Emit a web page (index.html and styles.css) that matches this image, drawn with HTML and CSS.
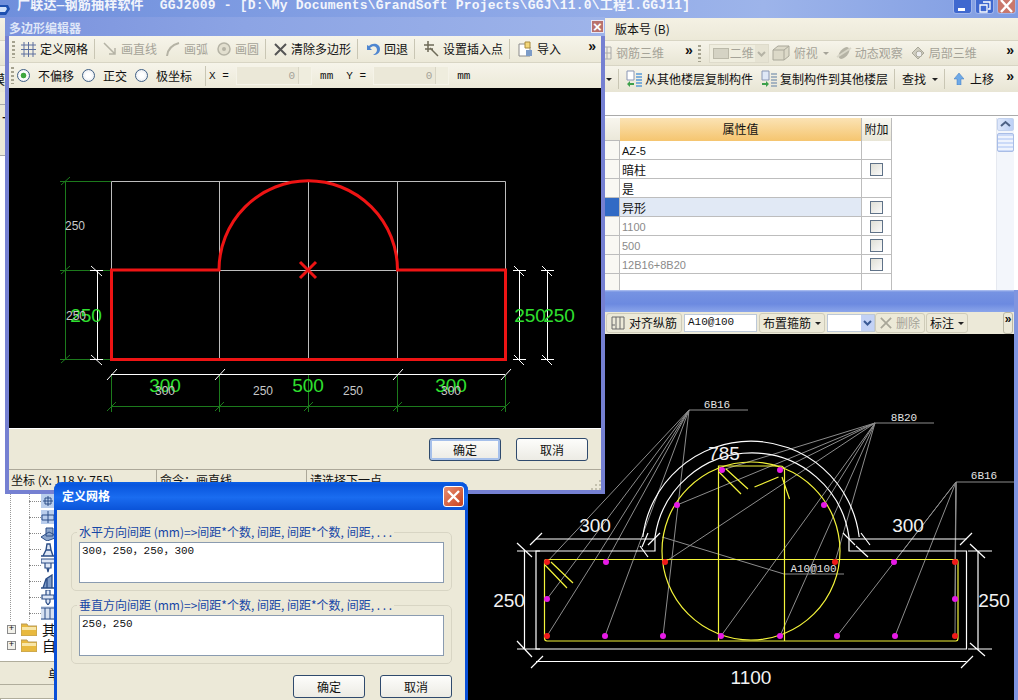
FILE: index.html
```html
<!DOCTYPE html>
<html lang="zh-CN">
<head>
    <meta charset="UTF-8">
    <title>广联达钢筋抽样软件 GGJ2009</title>
    <link rel="stylesheet" href="styles.css">
</head>
<body>
<div class="desktop">

    <!-- main window -->
    <div class="main-win">
        <div class="main-title">
            <svg class="app-icon" width="10" height="14" viewBox="0 0 10 14"><path d="M0 3h8l2 4-4 6H0z" fill="#1c4fb0"/><path d="M0 5h6l1 2-2 3H0z" fill="#cfe0fa"/></svg>
            <span class="main-title-text">广联达—钢筋抽样软件  GGJ2009 - [D:\My Documents\GrandSoft Projects\GGJ\11.0\工程1.GGJ11]</span>
            <div class="win-btns">
                <span class="win-btn"><svg width="19" height="14" viewBox="0 0 19 14"><rect x="5" y="8" width="7" height="3" fill="#fff"/></svg></span>
                <span class="win-btn"><svg width="19" height="14" viewBox="0 0 19 14"><path d="M8 2h7v7h-2M5 5h7v7H5z" fill="none" stroke="#fff" stroke-width="1.3"/></svg></span>
                <span class="win-btn close"><svg width="19" height="14" viewBox="0 0 19 14"><path d="M4 0l11 12M15 0L4 12" stroke="#fff" stroke-width="2.4"/></svg></span>
            </div>
        </div>
        <div class="bar menubar">
            <div class="tb-right"><span class="menu-item">版本号 (B)</span></div>
        </div>
        <div class="bar toolbar">
            <div class="tb-right">
                <svg class="ic ic-cut" width="8" height="16" viewBox="0 0 8 16"><path d="M0 2h7v12H0M3 2v12M0 8h7" fill="none" stroke="#aaa"/></svg>
                <span class="off w-steel">钢筋三维</span>
                <span class="more">»</span>
                <i class="grip"></i>
                <span class="combo off"><i class="combo-sw"></i>二维<b class="combo-arrow off-arrow"><svg width="13" height="17" viewBox="0 0 13 17"><path d="M3 7l3.500 3.500L10 7" fill="none" stroke="#b5b3a5" stroke-width="2"/></svg></b></span>
                <svg class="ic" width="20" height="18" viewBox="0 0 20 18"><path d="M2 6l5-4h11v10l-5 4H2zM2 6h11v10M13 6l5-4" fill="#dcd9c8" stroke="#aaa89a"/></svg>
                <span class="off">俯视</span>
                <span class="caret off-caret"></span>
                <svg class="ic gap-l" width="16" height="16" viewBox="0 0 16 16"><ellipse cx="8" cy="8" rx="4" ry="7" transform="rotate(40 8 8)" fill="#b5b3a5"/><path d="M1 12L15 3" stroke="#d8d6c8" stroke-width="2"/></svg>
                <span class="off">动态观察</span>
                <svg class="ic gap-l" width="16" height="16" viewBox="0 0 16 16"><path d="M2 8l6-6 6 6-6 6z" fill="#cfcdbf" stroke="#aaa89a"/><circle cx="9" cy="9" r="3" fill="#eee" stroke="#aaa89a"/></svg>
                <span class="off">局部三维</span>
                <span class="more push">»</span>
            </div>
        </div>
        <div class="bar toolbar tb-tall">
            <span class="cut-char">模</span>
            <div class="tb-right">
                <span class="caret"></span>
                <i class="sep"></i>
                <svg class="ic" width="17" height="18" viewBox="0 0 17 18"><path d="M1 1h7v9H1z" fill="#fff" stroke="#8a97b5"/><path d="M10 4h6M10 7h6M10 10h6M10 13h6M10 16h6" stroke="#5a9ad8" stroke-width="1.6"/><path d="M1 14l3-3v2h4v2H4v2z" fill="#3da04a"/></svg>
                <span>从其他楼层复制构件</span>
                <svg class="ic gap-m" width="17" height="18" viewBox="0 0 17 18"><path d="M1 1h7v9H1z" fill="#dfe8f7" stroke="#8a97b5"/><path d="M10 4h6M10 7h6M10 10h6M10 13h6M10 16h6" stroke="#8fa3b8" stroke-width="1.6"/><path d="M8 14l-3-3v2H1v2h4v2z" fill="#3da04a"/></svg>
                <span>复制构件到其他楼层</span>
                <i class="sep"></i>
                <span>查找</span>
                <span class="caret"></span>
                <i class="sep"></i>
                <svg class="ic gap-s" width="10" height="12" viewBox="0 0 10 12"><path d="M5 0l5 6H7v6H3V6H0z" fill="#6fa9e6" stroke="#3f78c0" stroke-width=".5"/></svg>
                <span class="up-label">上移</span>
                <span class="more push">»</span>
            </div>
        </div>

        <div class="workspace">
            <div class="side">
                <div class="side-head"><div class="side-tab"></div><div class="side-tick">-</div></div>
                <div class="tree">
                    <div class="tree-row leaf"><svg width="14" height="14" viewBox="0 0 14 14"><rect x="0" width="14" height="14" fill="#b9cdec"/><path d="M7 2v10M2 7h10M4 4h6v6H4z" fill="none" stroke="#2b4d86"/></svg></div>
                    <div class="tree-row leaf"><svg width="14" height="14" viewBox="0 0 14 14"><rect x="0" width="14" height="14" fill="#b9cdec"/><path d="M1 5h12v5H1zM7 1v12" fill="none" stroke="#2b4d86"/></svg></div>
                    <div class="tree-row leaf"><svg width="14" height="15" viewBox="0 0 14 15"><path d="M0 11l8-5 6 3v3l-8 3zM5 2h7v8H5z" fill="#8ea7cc" stroke="#2b4d86"/></svg></div>
                    <div class="tree-row leaf"><svg width="14" height="15" viewBox="0 0 14 15"><path d="M0 14h14M2 14l3-6h5l2 6M5 8l1-6h3l1 6" fill="#dfe7f5" stroke="#2b4d86" stroke-width="1.4"/></svg></div>
                    <div class="tree-row leaf"><svg width="14" height="15" viewBox="0 0 14 15"><path d="M0 1h14v4H0zM4 5h6v5H4zM6 10h2l-1 4z" fill="#dfe7f5" stroke="#2b4d86" stroke-width="1.2"/></svg></div>
                    <div class="tree-row leaf"><svg width="14" height="15" viewBox="0 0 14 15"><path d="M0 14h14M2 14l3-9 6-4v13M6 5v9" fill="#7f9cc8" stroke="#2b4d86" stroke-width="1.3"/></svg></div>
                    <div class="tree-row leaf"><svg width="14" height="15" viewBox="0 0 14 15"><path d="M5 0h4v5H5zM1 5h12v4H1zM5 9h4v3l-2 3-2-3z" fill="#dfe7f5" stroke="#2b4d86" stroke-width="1.2"/></svg></div>
                    <div class="tree-row leaf"><svg width="14" height="14" viewBox="0 0 14 14"><rect width="14" height="14" fill="#d6e0f0"/><path d="M0 2h14M4 2v11M9 2v11M0 13h14" stroke="#2b4d86"/></svg></div>
                    <div class="tree-row folder">
                        <span class="plus">+</span>
                        <svg width="16" height="14" viewBox="0 0 16 14"><path d="M0 2h6l1 2h9v10H0z" fill="#e8b93e" stroke="#b89a58"/><path d="M1 5h14v3H1z" fill="#f8e6a8"/></svg>
                        <span class="tree-label">其他</span>
                    </div>
                    <div class="tree-row folder">
                        <span class="plus">+</span>
                        <svg width="16" height="14" viewBox="0 0 16 14"><path d="M0 2h6l1 2h9v10H0z" fill="#e8b93e" stroke="#b89a58"/><path d="M1 5h14v3H1z" fill="#f8e6a8"/></svg>
                        <span class="tree-label">自定义</span>
                    </div>
                </div>
                <div class="side-foot">单构件输入</div>
                <div class="side-tabs"><div class="side-tab-white"></div></div>
            </div>

            <div class="content">
                <div class="grid-top"></div>
                <div class="grid-pane">
                    <div class="prop-grid">
                        <div class="hd-corner"></div><div class="hd-value">属性值</div><div class="hd-extra">附加</div>
                        <div class="rh"></div><div class="val latin">AZ-5</div><div class="chk"></div>
                        <div class="rh"></div><div class="val">暗柱</div><div class="chk"><i class="box"></i></div>
                        <div class="rh"></div><div class="val">是</div><div class="chk"></div>
                        <div class="rh sel"></div><div class="val sel">异形</div><div class="chk"><i class="box"></i></div>
                        <div class="rh"></div><div class="val latin dim">1100</div><div class="chk"><i class="box"></i></div>
                        <div class="rh"></div><div class="val latin dim">500</div><div class="chk"><i class="box"></i></div>
                        <div class="rh"></div><div class="val latin dim">12B16+8B20</div><div class="chk"><i class="box"></i></div>
                        <div class="rh last"></div><div class="val last"></div><div class="chk last"></div>
                    </div>
                    <div class="scroll">
                        <div class="scroll-btn"><svg width="17" height="13" viewBox="0 0 17 13"><path d="M4 8l4.500-4 4.500 4" fill="none" stroke="#4d6185" stroke-width="2"/></svg></div>
                        <div class="scroll-thumb"></div>
                    </div>
                </div>

                <div class="sub-panel">
                    <div class="sub-caption"></div>
                    <div class="bar sub-toolbar">
                        <div class="sub-tools">
                            <span class="flat-btn"><svg width="14" height="14" viewBox="0 0 14 14"><path d="M1 1h12v12H1zM5 1v12M9 1v12M1 9h3" fill="none" stroke="#6a6a6a"/></svg>对齐纵筋</span>
                            <span class="text-in">A10@100</span>
                            <span class="flat-btn tight">布置箍筋<span class="caret"></span></span>
                            <span class="select-in"><b class="combo-arrow"><svg width="13" height="16" viewBox="0 0 13 16"><path d="M3 6l3.500 3.500L10 6" fill="none" stroke="#3a5a95" stroke-width="2"/></svg></b></span>
                            <span class="flat-btn disabled"><svg width="14" height="14" viewBox="0 0 14 14"><path d="M1 1l12 12M13 1L1 13" stroke="#a8a698" stroke-width="2"/></svg>删除</span>
                            <span class="flat-btn tight">标注<span class="caret"></span></span>
                            <span class="more-box">»</span>
                        </div>
                    </div>
                    <svg class="rebar-canvas" viewBox="200 334 814 366" preserveAspectRatio="xMinYMin">
                        <!-- leader lines -->
                        <g stroke="#8c8c8c" stroke-width="1" fill="none">
                            <path d="M689 410H748M689 410L547 562M689 410L606 562M689 410L547 599M689 410L547 636M689 410L605 636M689 410L663 636"/>
                            <path d="M875 423H934M875 423L722 470M875 423L780 470M875 423L677 505M875 423L824 505M875 423L665 562M875 423L835 562M875 423L721 636M875 423L780 636"/>
                            <path d="M956 482H1014M956 482L894 562M956 482L955 562M956 482L955 599M956 482L955 636M956 482L837 636M956 482L895 636"/>
                            <path d="M662 537L784 574H844"/>
                        </g>
                        <!-- outline and dimensions -->
                        <g stroke="#fff" stroke-width="1.2" fill="none">
                            <path d="M536 551H655V537A98 98 0 0 1 849 537V551H966.500V649H536Z"/>
                            <path d="M642.800 537A109 109 0 0 1 859.200 537"/>
                            <path d="M536 539H654M849 539H966.500M524.500 551V649M978 551V649M536 661.500H966.500"/>
                            <path d="M530 545L542 533M648 545L660 533M642 547L648 533M861 533L870 545M843 533L855 545M960 545L972 533M517 551H540M517 543L532 557M517 649H540M517 641L532 657M968 551H992M970 544L985 558M968 649H992M970 643L985 656M531 668L543 656M961 668L973 656M640 546L648 557M856 546L868 557"/>
                        </g>
                        <!-- stirrups -->
                        <g stroke="#f4f43a" fill="none" stroke-width="1.2">
                            <circle cx="751" cy="551" r="89"/>
                            <path d="M546 559.500H956Q958 559.500 958 562V638Q958 641 956 641H547Q544.500 641 544.500 638V562Q544.500 559.500 546 559.500Z"/>
                            <path d="M718.500 641V466H780Q784.500 466 784.500 471V641"/>
                            <path d="M545 565L567 588M551 562L573 583M719 472L741 494M726 469L748 489M754.500 487L778.500 477M782 477L789.500 499"/>
                        </g>
                        <!-- bars -->
                        <g fill="#f01a1a">
                            <circle cx="547" cy="562" r="3"/><circle cx="665" cy="562" r="3"/><circle cx="835" cy="562" r="3"/><circle cx="955" cy="562" r="3"/><circle cx="547" cy="636" r="3"/><circle cx="955" cy="636" r="3"/>
                        </g>
                        <g fill="#e61ae6">
                            <circle cx="606" cy="562" r="3"/><circle cx="894" cy="562" r="3"/><circle cx="547" cy="599" r="3"/><circle cx="955" cy="599" r="3"/><circle cx="605" cy="636" r="3"/><circle cx="663" cy="636" r="3"/><circle cx="721" cy="636" r="3"/><circle cx="780" cy="636" r="3"/><circle cx="837" cy="636" r="3"/><circle cx="895" cy="636" r="3"/><circle cx="722" cy="470" r="3"/><circle cx="780" cy="470" r="3"/><circle cx="677" cy="505" r="3"/><circle cx="824" cy="505" r="3"/>
                        </g>
                        <g class="cad-big">
                            <text x="595" y="532">300</text><text x="908" y="532">300</text><text x="724" y="460">785</text><text x="509" y="607">250</text><text x="994" y="607">250</text><text x="751" y="684">1100</text>
                        </g>
                        <g class="cad-small">
                            <text x="717" y="408">6B16</text><text x="904" y="421">8B20</text><text x="984" y="479">6B16</text><text x="813.500" y="572">A10@100</text>
                        </g>
                    </svg>
                </div>
            </div>
        </div>
    </div>

    <!-- polygon editor -->
    <div class="editor-win">
        <div class="editor-title">多边形编辑器<span class="editor-close">×</span></div>
        <div class="bar ed-bar ed-bar1">
            <i class="grip"></i>
            <svg class="ic" width="15" height="15" viewBox="0 0 15 15"><path d="M3 0v15M7.500 0v15M12 0v15M0 3h15M0 7.500h15M0 12h15" stroke="#5c6f9e"/></svg>
            <span class="lbl">定义网格</span>
            <i class="sep"></i>
            <svg class="ic" width="14" height="14" viewBox="0 0 14 14"><path d="M1 1l11 11M12 6v6H6" fill="none" stroke="#b5b3a5" stroke-width="1.5"/></svg>
            <span class="lbl off">画直线</span>
            <svg class="ic gap-m" width="14" height="14" viewBox="0 0 14 14"><path d="M1 14Q2 4 13 1" fill="none" stroke="#b5b3a5" stroke-width="2"/></svg>
            <span class="lbl off">画弧</span>
            <svg class="ic gap-m" width="14" height="14" viewBox="0 0 14 14"><circle cx="7" cy="7" r="6" fill="#e2dfcf" stroke="#b5b3a5" stroke-width="1.500"/><circle cx="7" cy="7" r="2" fill="#b5b3a5"/></svg>
            <span class="lbl off">画圆</span>
            <i class="sep"></i>
            <svg class="ic" width="13" height="13" viewBox="0 0 13 13"><path d="M1 1l11 11M12 1L1 12" stroke="#555" stroke-width="2"/></svg>
            <span class="lbl">清除多边形</span>
            <i class="sep"></i>
            <svg class="ic" width="14" height="13" viewBox="0 0 14 13"><path d="M1 2v5h5L4 5c3-3 7-2 7 2 0 2-2 4-4 5 4 0 7-2 7-6C14 1 7-1 3 3z" fill="#4f86d0"/></svg>
            <span class="lbl">回退</span>
            <i class="sep"></i>
            <svg class="ic" width="16" height="16" viewBox="0 0 16 16"><path d="M5 0v11M1 4h10M2 8h8M7 7l8 8" stroke="#6e6a58" stroke-width="1.500"/></svg>
            <span class="lbl">设置插入点</span>
            <i class="sep"></i>
            <svg class="ic" width="15" height="16" viewBox="0 0 15 16"><path d="M1 3h8l3 3v9H1z" fill="#fff" stroke="#8a8a8a"/><path d="M7 1h5v6H7z" fill="#f3d77a" stroke="#a88a3c"/><path d="M8 9h6v6H8z" fill="#7d9cc8"/></svg>
            <span class="lbl">导入</span>
            <span class="more push">»</span>
        </div>
        <div class="bar ed-bar ed-bar2">
            <i class="grip"></i>
            <i class="radio on"></i><span class="lbl r1">不偏移</span>
            <i class="radio"></i><span class="lbl r2">正交</span>
            <i class="radio"></i><span class="lbl r3">极坐标</span>
            <i class="sep"></i>
            <span class="mono x-label">X =</span>
            <span class="num-in">0<b class="spin"></b></span>
            <span class="mono mm">mm</span>
            <span class="mono y-label">Y =</span>
            <span class="num-in">0<b class="spin"></b></span>
            <span class="mono mm">mm</span>
        </div>
        <svg class="editor-canvas" viewBox="9 88 592 340">
            <g stroke="#bdbdbd" fill="none">
                <path d="M111.500 181.500H505.500V359.500H111.500ZM219.500 181.500V359.500M308.500 181.500V359.500M397.500 181.500V359.500M111.500 270.500H505.500"/>
            </g>
            <g stroke="#1c7a1c" fill="none">
                <path d="M65.500 181V359M111 406.500H505M60 181.500H111M60 270.500H111M60 359.500H111M111.500 375V412M219.500 375V412M308.500 375V412M397.500 375V412M505.500 375V412"/>
                <path d="M61 185L70 177M61 274L70 266M61 363L70 355M107 411L116 402M215 411L224 402M304 411L313 402M393 411L402 402M501 411L510 402"/>
            </g>
            <g stroke="#fff" fill="none">
                <path d="M97.500 270V359M519.500 270V359M547.500 270V359M111 374.500H505"/>
                <path d="M90 270.500H103M91 266L102 276M90 359.500H103M91 355L102 365M513 270.500H526M514 266L524 276M513 359.500H526M514 355L524 365M541 270.500H554M542 266L552 276M541 359.500H554M542 355L552 365M107 380L117 369M215 380L225 369M393 380L403 369M501 380L511 369"/>
            </g>
            <path class="poly" d="M111.500 270H219A89 89 0 0 1 397.500 270H505.500V359.500H111.500Z"/>
            <path d="M300 262L316 278M316 262L300 278" stroke="#ee1414" stroke-width="3"/>
            <g class="cad-green">
                <text x="86" y="322">250</text><text x="530" y="322">250</text><text x="559" y="322">250</text><text x="165" y="392">300</text><text x="308" y="392">500</text><text x="451" y="392">300</text>
            </g>
            <g class="cad-gray">
                <text x="75" y="230">250</text><text x="76" y="320">250</text><text x="165" y="395">300</text><text x="263" y="395">250</text><text x="353" y="395">250</text><text x="451" y="395">300</text>
            </g>
        </svg>
        <div class="editor-foot">
            <button class="xp-btn default">确定</button>
            <button class="xp-btn">取消</button>
        </div>
        <div class="editor-status">
            <span class="st st1">坐标 (X: 118 Y: 755)</span>
            <span class="st st2">命令：画直线</span>
            <span class="st st3">请选择下一点</span>
            <svg class="resize" width="12" height="12" viewBox="0 0 12 12"><path d="M10 2h2v2h-2zM6 6h2v2H6zM10 6h2v2h-2zM2 10h2v2H2zM6 10h2v2H6zM10 10h2v2h-2z" fill="#c4c1ae"/></svg>
        </div>
    </div>

    <!-- grid dialog -->
    <div class="grid-dialog">
        <div class="dlg-title">
            <span>定义网格</span>
            <span class="dlg-close"><svg width="13" height="13" viewBox="0 0 13 13"><path d="M1 1l11 11M12 1L1 12" stroke="#fff" stroke-width="2.400"/></svg></span>
        </div>
        <div class="dlg-body">
            <fieldset class="dlg-group">
                <legend>水平方向间距 (mm)=&gt;间距*个数, 间距, 间距*个数, 间距, . . .</legend>
                <textarea class="dlg-text" readonly>300，250，250，300</textarea>
            </fieldset>
            <fieldset class="dlg-group">
                <legend>垂直方向间距 (mm)=&gt;间距*个数, 间距, 间距*个数, 间距, . . .</legend>
                <textarea class="dlg-text" readonly>250，250</textarea>
            </fieldset>
            <div class="dlg-actions">
                <button class="xp-btn">确定</button>
                <button class="xp-btn">取消</button>
            </div>
        </div>
    </div>
</div>
</body>
</html>
```

FILE: styles.css
```css
* {
    box-sizing: border-box;
}

html, body {
    margin: 0;
    padding: 0;
}

body {
    font-family: "Noto Sans CJK SC", "Liberation Sans", sans-serif;
    font-size: 12px;
    line-height: 14px;
    color: #111;
    background-color: #000;
}

.desktop {
    position: relative;
    width: 1018px;
    height: 700px;
    overflow: hidden;
}

/* main window */
.main-win {
    width: 1018px;
    height: 700px;
    display: flex;
    flex-direction: column;
    background-color: #ece9d8;
}

.main-title {
    height: 18px;
    flex: none;
    display: flex;
    align-items: flex-start;
    background: linear-gradient(90deg, #6f8fdc 0%, #8aa5e6 45%, #9db4ea 75%, #7f9ce2 100%);
    color: #fff;
    overflow: hidden;
}

.app-icon {
    margin: 2px 7px 0 0;
    flex: none;
}

.main-title-text {
    font-family: "Liberation Mono", "Noto Sans CJK SC", monospace;
    font-size: 13px;
    font-weight: bold;
    letter-spacing: 0.2px;
    line-height: 11px;
    white-space: pre;
    opacity: 0.9;
}

.win-btns {
    margin-left: auto;
    margin-right: 2px;
    display: flex;
    gap: 3px;
}

.win-btn {
    width: 19px;
    height: 14px;
    background-color: #3f68cf;
    border: 1px solid #9fb4ea;
    border-top: none;
    border-radius: 0 0 3px 3px;
    display: block;
    overflow: hidden;
}

.win-btn svg {
    display: block;
    margin: 0 -1px;
}

.win-btn.close {
    background-color: #c9786c;
}

.bar {
    flex: none;
    display: flex;
    align-items: center;
    background-color: #ece9d8;
    white-space: nowrap;
}

.menubar {
    height: 22px;
    background: linear-gradient(180deg, #f4f1e4, #ece9d8);
}

.toolbar {
    height: 25px;
    background: linear-gradient(180deg, #f6f4ea, #e8e5d4);
    border-top: 1px solid #d8d5c4;
}

.tb-tall {
    height: 27px;
}

.tb-right {
    margin-left: auto;
    width: 413px;
    height: 100%;
    display: flex;
    align-items: center;
    padding-left: 4px;
    padding-right: 4px;
}

.tb-tall .tb-right {
    padding-left: 1px;
}

.tb-tall .tb-right > .caret:first-child {
    margin-left: 0;
}

.tb-tall .ic {
    margin-right: 2px;
}

.tb-tall .ic.gap-s {
    margin-right: 6px;
}

.menu-item {
    margin-left: 6px;
    font-size: 12px;
}

.cut-char {
    margin-left: -8px;
    font-size: 13px;
}

.off {
    color: #a5a398;
}

.ic {
    flex: none;
    margin-right: 3px;
}

.ic-cut {
    margin-left: -5px;
    margin-right: 4px;
}

.gap-l {
    margin-left: 7px;
}

.gap-m {
    margin-left: 8px;
}

.gap-s {
    margin-left: 2px;
    margin-right: 6px;
}

.w-steel {
    width: 69px;
}

.more {
    font-family: "Liberation Sans", sans-serif;
    font-size: 14px;
    font-weight: bold;
    line-height: 10px;
    margin-bottom: 6px;
}

.push {
    margin-left: auto;
}

.grip {
    flex: none;
    width: 3px;
    height: 17px;
    margin: 0 8px 0 5px;
    background: repeating-linear-gradient(180deg, #a5a28f 0 2px, transparent 2px 4px);
}

.sep {
    flex: none;
    width: 1px;
    height: 20px;
    margin: 0 7px 0 6px;
    background-color: #c9c6b4;
}

.caret {
    display: inline-block;
    flex: none;
    width: 0;
    height: 0;
    margin-left: 6px;
    border-left: 3px solid transparent;
    border-right: 3px solid transparent;
    border-top: 3px solid #222;
}

.off-caret {
    margin-left: 5px;
    border-top-color: #a5a398;
}

.combo {
    width: 60px;
    height: 19px;
    margin-right: 2px;
    display: flex;
    align-items: center;
    border: 1px solid #dedbcb;
    background-color: #efedde;
}

.combo-sw {
    width: 16px;
    height: 11px;
    margin: 0 1px 0 3px;
    background-color: #d5d3c4;
    border: 1px solid #bbb9a9;
}

.combo-arrow {
    display: block;
    width: 13px;
    height: 100%;
    margin-left: auto;
    background-color: #c3d2f5;
}

.combo-arrow svg {
    display: block;
}

.off-arrow {
    background-color: #e6e3d3;
}

.up-label {
    margin-left: 0;
}

/* workspace */
.workspace {
    flex: 1;
    min-height: 0;
    display: flex;
}

.side {
    width: 200px;
    flex: none;
    display: flex;
    flex-direction: column;
    background-color: #fff;
}

.side-head {
    height: 64px;
    flex: none;
    background-color: #ece9d8;
    border-bottom: 1px solid #aaa;
}

.side-tab {
    height: 13px;
    border-bottom: 1px solid #aaa;
}

.side-tick {
    margin-top: 5px;
    padding-left: 2px;
    font-weight: bold;
    line-height: 12px;
}

.tree {
    flex: 1;
    min-height: 0;
    display: flex;
    flex-direction: column;
    justify-content: flex-end;
    padding-bottom: 8px;
    background-image:
        linear-gradient(#999 50%, transparent 50%),
        linear-gradient(#999 50%, transparent 50%);
    background-size: 1px 2px, 1px 2px;
    background-repeat: repeat-y;
    background-position: 10px 0, 29px 0;
    background-clip: content-box;
}

.tree-row {
    height: 16px;
    flex: none;
    display: flex;
    align-items: center;
}

.leaf {
    padding-left: 29px;
}

.leaf::before {
    content: "";
    width: 12px;
    height: 0;
    border-top: 1px dotted #888;
}

.folder {
    padding-left: 7px;
    background-color: #fff;
    font-size: 14px;
}

.plus {
    width: 9px;
    height: 9px;
    margin-right: 5px;
    border: 1px solid #8a8a8a;
    font-family: "Liberation Mono", monospace;
    font-size: 9px;
    line-height: 7px;
    text-align: center;
    background-color: #f2f1ea;
}

.tree-label {
    margin-left: 5px;
}

.side-foot {
    height: 24px;
    flex: none;
    padding-left: 48px;
    line-height: 24px;
    font-size: 13px;
    background-color: #ece9d8;
    border-top: 1px solid #b0ad9c;
    border-bottom: 1px solid #b0ad9c;
}

.side-tabs {
    height: 15px;
    flex: none;
    background-color: #ece9d8;
    padding-top: 13px;
}

.side-tab-white {
    width: 138px;
    height: 3px;
    background-color: #fff;
    border: 1px solid #b0ad9c;
}

.content {
    flex: 1;
    min-width: 0;
    display: flex;
    flex-direction: column;
    background-color: #fff;
}

.grid-top {
    height: 24px;
    flex: none;
    border-bottom: 1px solid #aaa;
}

.grid-pane {
    height: 174px;
    flex: none;
    display: flex;
    padding-top: 2px;
    background-color: #fff;
    overflow: hidden;
}

.prop-grid {
    margin-left: 405px;
    display: grid;
    grid-template-columns: 15px 241px 31px;
    grid-template-rows: 23px repeat(7, 19px) 16px;
}

.hd-corner {
    background: linear-gradient(180deg, #f8f6ee, #ebe8da);
    border-bottom: 1px solid #bbb;
}

.hd-value {
    background: linear-gradient(180deg, #fbe3b4, #f5c56f);
    text-align: center;
    line-height: 22px;
}

.hd-extra {
    background: linear-gradient(180deg, #faf9f2, #e8e5d6);
    border-left: 1px solid #bbb;
    border-right: 1px solid #bbb;
    text-align: center;
    line-height: 22px;
}

.rh, .val, .chk {
    border-bottom: 1px solid #bdbdbd;
}

.rh {
    background-color: #f9f8f3;
    border-right: 1px solid #bdbdbd;
}

.rh.sel {
    background-color: #316ac5;
}

.val {
    padding: 2px 0 0 2px;
    line-height: 16px;
    font-size: 12px;
}

.val.latin {
    font-family: "Liberation Sans", sans-serif;
    font-size: 11px;
}

.val.sel {
    background-color: #e1e9f5;
}

.val.dim {
    color: #8a8a8a;
}

.chk {
    border-left: 1px solid #bdbdbd;
    border-right: 1px solid #bdbdbd;
    display: flex;
    align-items: center;
    justify-content: center;
}

.last {
    border-bottom: none;
}

.box {
    display: block;
    width: 13px;
    height: 13px;
    border: 1px solid #5f7288;
    background: linear-gradient(135deg, #dfdfd6, #fafafa);
}

.scroll {
    margin-left: 104px;
    width: 18px;
    background-color: #f3f6fb;
    border-left: 1px solid #e6e9f0;
}

.scroll-btn {
    height: 13px;
    background: linear-gradient(90deg, #dfe8fb, #bcd0f6);
    border: 1px solid #c3d2ee;
    border-radius: 2px;
}

.scroll-btn svg {
    display: block;
    margin: -1px;
}

.scroll-thumb {
    height: 19px;
    margin-top: 2px;
    border: 1px solid #a9bde6;
    border-radius: 2px;
    background: repeating-linear-gradient(180deg, #cbdaf8 0 2px, #eef3fd 2px 4px);
}

.sub-panel {
    flex: 1;
    min-height: 0;
    display: flex;
    flex-direction: column;
    border-right: 4px solid #7f95e0;
    background-color: #000;
}

.sub-caption {
    height: 22px;
    flex: none;
    background: linear-gradient(180deg, #b6c6f2 0, #7693e2 2px, #6c8ae0 14px, #8ba5ea 100%);
}

.sub-toolbar {
    height: 22px;
    background-color: #ece9d8;
}

.sub-tools {
    margin-left: auto;
    width: 408px;
    height: 100%;
    display: flex;
    align-items: center;
}

.flat-btn {
    height: 20px;
    padding: 0 4px;
    margin-right: 2px;
    display: flex;
    align-items: center;
    gap: 4px;
    border: 1px solid #cfccb9;
    border-radius: 3px;
    background-color: #ece9d8;
}

.flat-btn .caret {
    margin-left: 0;
}

.flat-btn.tight {
    padding: 0 3px;
}

.flat-btn.disabled {
    color: #a5a398;
    width: 50px;
    margin-right: 1px;
}

.text-in {
    width: 73px;
    height: 18px;
    margin-right: 2px;
    padding-left: 3px;
    font-family: "Liberation Mono", monospace;
    font-size: 11px;
    line-height: 15px;
    background-color: #fff;
    border: 1px solid #bcc8d8;
}

.select-in {
    width: 48px;
    height: 18px;
    background-color: #fff;
    border: 1px solid #bcc8d8;
}

.more-box {
    margin-left: auto;
    margin-right: 1px;
    width: 10px;
    height: 22px;
    font-family: "Liberation Sans", sans-serif;
    font-size: 12px;
    font-weight: bold;
    line-height: 12px;
    text-align: center;
    border: 1px solid #bbb8a6;
    border-radius: 3px;
}

.rebar-canvas {
    display: block;
    flex: 1;
    min-height: 0;
    width: 100%;
    background-color: #000;
}

.cad-big text {
    fill: #f2f2f2;
    font-family: "Liberation Sans", sans-serif;
    font-size: 19px;
    text-anchor: middle;
}

.cad-small text {
    fill: #e4e4e4;
    font-family: "Liberation Mono", monospace;
    font-size: 11px;
    text-anchor: middle;
}

/* editor window */
.editor-win {
    position: absolute;
    left: 5px;
    top: 17px;
    width: 600px;
    height: 477px;
    display: flex;
    flex-direction: column;
    background-color: #ece9d8;
    border: 4px solid #7580d2;
    border-top: none;
}

.editor-title {
    height: 19px;
    flex: none;
    margin: 0 -4px;
    padding-left: 4px;
    position: relative;
    color: #dfe6f8;
    font-weight: bold;
    line-height: 21px;
    background: linear-gradient(90deg, #7a92dd, #8ca4e4 40%, #9eb4ea);
}

.editor-close {
    position: absolute;
    right: 1px;
    top: 3px;
    width: 13px;
    height: 13px;
    font-family: "Liberation Sans", sans-serif;
    font-size: 15px;
    line-height: 12px;
    text-align: center;
    color: #fff;
    background-color: #b8716c;
    border: 1px solid #e7e7f5;
}

.ed-bar {
    background: linear-gradient(180deg, #f6f4ea, #ece9d8);
}

.ed-bar1 {
    height: 27px;
    padding-left: 3px;
    border-bottom: 1px solid #d8d5c4;
}

.ed-bar2 {
    height: 25px;
    padding-left: 2px;
}

.ed-bar .grip {
    margin: 0 4px 0 0;
}

.ed-bar1 .lbl, .ed-bar1 .sep {
    flex: none;
}

.ed-bar1 .sep {
    margin-right: 8px;
}

.ed-bar1 .ic {
    margin-right: 4px;
    margin-left: 0;
}

.ed-bar1 .ic.gap-m {
    margin-left: 9px;
}

.ed-bar1 .ic:first-of-type {
    margin-left: 2px;
}

.ed-bar1 .more {
    margin-right: 5px;
}

.radio {
    flex: none;
    width: 13px;
    height: 13px;
    margin-left: 1px;
    border: 1px solid #3f5f85;
    border-radius: 50%;
    background: radial-gradient(circle, #fff 30%, #dfe3ea 100%);
}

.radio.on {
    background: radial-gradient(circle, #3fa73f 0 2.5px, #fff 3.2px, #e6e8ee 100%);
}

.ed-bar2 .grip {
    margin-right: 2px;
}

.r1 {
    margin: 0 7px 0 8px;
}

.r2 {
    margin: 0 7px 0 8px;
}

.r3 {
    margin: 0 8px 0 8px;
}

.ed-bar2 .sep {
    margin: 0 3px 0 5px;
}

.mono {
    font-family: "Liberation Mono", monospace;
    font-size: 11px;
}

.x-label, .y-label {
    width: 27px;
}

.y-label {
    margin-left: 13px;
}

.mm {
    margin-left: 8px;
}

.num-in {
    width: 76px;
    height: 19px;
    display: flex;
    align-items: center;
    justify-content: flex-end;
    color: #a5a398;
    font-family: "Liberation Mono", monospace;
    font-size: 11px;
    background-color: #ebe8d8;
    border: 1px solid #f5f3e8;
}

.spin {
    width: 13px;
    height: 17px;
    margin-left: 3px;
    background-color: #efedde;
    border-left: 1px solid #d8d5c4;
}

.editor-canvas {
    display: block;
    width: 592px;
    height: 340px;
    flex: none;
    background-color: #000;
}

.poly {
    fill: none;
    stroke: #ee1414;
    stroke-width: 3;
}

.cad-green text {
    fill: #2fe02f;
    font-family: "Liberation Sans", sans-serif;
    font-size: 19px;
    text-anchor: middle;
}

.cad-gray text {
    fill: #c8c8c8;
    font-family: "Liberation Sans", sans-serif;
    font-size: 12px;
    text-anchor: middle;
}

.editor-foot {
    height: 42px;
    flex: none;
    display: flex;
    justify-content: flex-end;
    align-items: center;
    gap: 15px;
    padding-right: 13px;
    border-top: 1px solid #fff;
    border-bottom: 1px solid #aca899;
}

.editor-status {
    flex: 1;
    display: flex;
    position: relative;
    overflow: hidden;
    line-height: 20px;
    font-size: 12px;
}

.st {
    padding-left: 2px;
    flex: none;
    border-right: 1px solid #aca899;
}

.st1 {
    width: 148px;
}

.st2 {
    width: 150px;
    padding-left: 3px;
}

.st3 {
    border-right: none;
    padding-left: 3px;
}

.resize {
    position: absolute;
    right: 0;
    bottom: 0;
}

.xp-btn {
    width: 72px;
    height: 23px;
    padding: 0;
    font-family: "Noto Sans CJK SC", "Liberation Sans", sans-serif;
    font-size: 12px;
    color: #111;
    background: linear-gradient(180deg, #fdfdfb, #ecebe4);
    border: 1px solid #2f4a6d;
    border-radius: 3px;
}

.xp-btn.default {
    border-color: #2f4a6d;
    box-shadow: inset 0 0 0 2px #a6c0ea;
}

/* dialog */
.grid-dialog {
    position: absolute;
    left: 54px;
    top: 482px;
    width: 414px;
    height: 240px;
    display: flex;
    flex-direction: column;
    background-color: #ece9d8;
    border: 3px solid #0a50d8;
    border-top: none;
    border-radius: 8px 8px 0 0;
}

.dlg-title {
    height: 28px;
    flex: none;
    margin: 0 -3px;
    padding: 0 4px 0 8px;
    display: flex;
    align-items: center;
    justify-content: space-between;
    color: #fff;
    font-weight: bold;
    background: linear-gradient(180deg, #0a5fe6 0, #0855dd 10%, #1a6cf0 55%, #0a53d8 100%);
    border-radius: 8px 8px 0 0;
}

.dlg-close {
    width: 21px;
    height: 21px;
    display: flex;
    align-items: center;
    justify-content: center;
    background: linear-gradient(135deg, #e88f72, #c8411f);
    border: 1px solid #fff;
    border-radius: 3px;
}

.dlg-body {
    flex: 1;
    padding: 15px 13px 0 14px;
}

.dlg-group {
    height: 66px;
    margin: 0 0 7px;
    padding: 3px 7px 0;
    border: 1px solid #d8d5c4;
    border-radius: 5px;
    min-width: 0;
}

.dlg-group legend {
    padding: 0 2px;
    margin-left: -2px;
    color: #1747a6;
    font-size: 12px;
    line-height: 14px;
    white-space: nowrap;
}

.dlg-text {
    display: block;
    width: 100%;
    height: 41px;
    padding: 1px 2px;
    resize: none;
    overflow: hidden;
    font-family: "Liberation Mono", "Noto Sans CJK SC", monospace;
    font-size: 11px;
    line-height: 14px;
    color: #111;
    background-color: #fff;
    border: 1px solid #8a9bb0;
    border-radius: 0;
    outline: none;
}

.dlg-actions {
    display: flex;
    justify-content: flex-end;
    gap: 15px;
    padding-top: 4px;
}
```
